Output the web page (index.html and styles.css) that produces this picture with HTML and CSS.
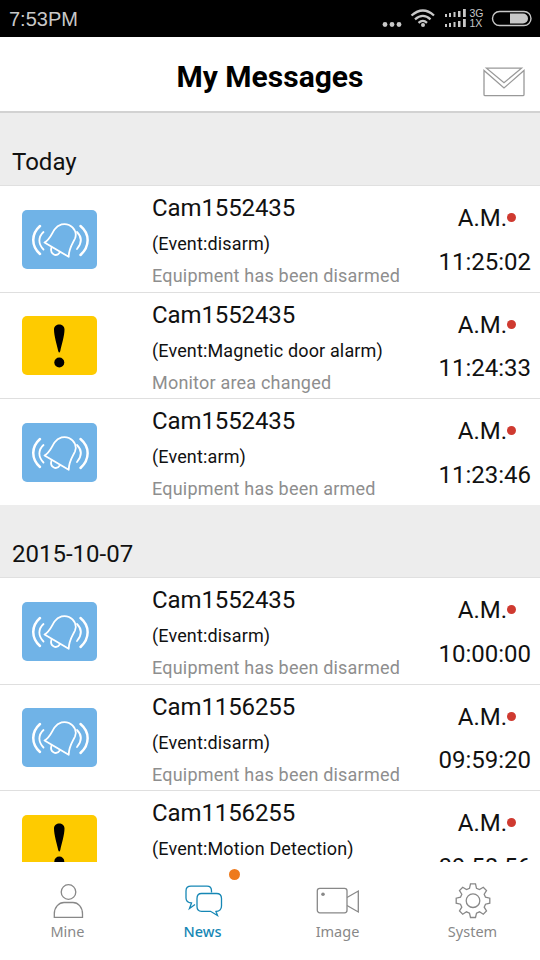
FILE: index.html
```html
<!DOCTYPE html>
<html lang="en">

<head>
    <meta charset="UTF-8" />
    <meta name="viewport" content="width=device-width, initial-scale=1.0" />
    <title>My Messages</title>
    <link rel="stylesheet" href="styles.css">
</head>

<body>
    <!-- Shared row icons -->
    <svg class="sprite" width="0" height="0">
        <symbol id="bell" viewBox="0 0 75 59">
            <g fill="none" stroke="#fff" stroke-width="1.8" stroke-linecap="round" stroke-linejoin="round">
                <path d="M22.500 32.500C28 29.500 29.500 24 32.500 19.500C36.500 14 42.500 13 47 15C53 18 55 23.500 53 28.500C50.500 34 46.800 38 46.700 46.800Z" />
                <path d="M29.500 37.500C27.500 43.500 34 48 38 42.200" />
                <path d="M21.500 22C16 27 16 34 21.500 39.500M55 22C60 27 60 33 55 39" />
                <path stroke-width="2.500" d="M18 16C9 24 9 36 18 44M58.500 16C68 24 68 36 58.500 45" />
            </g>
        </symbol>
        <symbol id="warn" viewBox="0 0 75 59">
            <path d="M32 13.500C32 6.800 42.500 6.800 42.500 13.500C42.500 20 39.500 29 38.300 35Q37.200 38 36.200 35C35 29 32 20 32 13.500Z" />
            <circle cx="37.300" cy="46.500" r="5" />
        </symbol>
    </svg>

    <div class="status-bar">
        <span>7:53PM</span>
        <svg width="160" height="37" viewBox="0 0 160 37" fill="#c8c8c8">
            <circle cx="5" cy="24.500" r="2.400" />
            <circle cx="12" cy="24.500" r="2.400" />
            <circle cx="19" cy="24.500" r="2.400" />
            <g fill="none" stroke="#c8c8c8" stroke-width="2.300">
                <path d="M31.500 15.500Q43 5.500 54 15.500M35 19.300Q43 12.500 50.500 19.300M38.500 22.800Q43 19 47 22.800" />
            </g>
            <circle cx="43" cy="25" r="2" />
            <path d="M65 14h2v3h-2zM69 13h2v4h-2zM73.500 12h2v5h-2zM78 11h2.500v6h-2.500zM83 9h2.800v8h-2.800z" />
            <path d="M65 24h2v3h-2zM69 23h2v4h-2zM73.500 22h2v5h-2zM78 21h2.500v6h-2.500zM83 19h2.800v8h-2.800z" />
            <text x="89.500" y="17" class="net">3G</text>
            <text x="89.500" y="27" class="net">1X</text>
            <rect x="112.500" y="11.500" width="38.500" height="14" rx="7" fill="none" stroke="#c8c8c8" stroke-width="1.400" />
            <path d="M130 13.500h13a5 5 0 0 1 0 10h-13z" />
        </svg>
    </div>

    <header>
        <h1>My Messages</h1>
        <svg class="mail" width="42" height="30" viewBox="0 0 42 30" fill="none" stroke="#999" stroke-width="1.300">
            <path d="M1 3.500V27.500Q1 28.700 2.200 28.700H39.800Q41 28.700 41 27.500V3.500L21 21Z" />
            <path d="M3.500 1.200H38.500L21 15.700Z" />
        </svg>
    </header>

    <main>
        <h2>Today</h2>
        <ul>
            <li>
                <svg class="icon blue"><use href="#bell" /></svg>
                <div class="info">
                    <p class="name">Cam1552435</p>
                    <p class="event">(Event:disarm)</p>
                    <p class="desc">Equipment has been disarmed</p>
                </div>
                <div class="time"><p class="unread">A.M.</p><p>11:25:02</p></div>
            </li>
            <li>
                <svg class="icon yellow"><use href="#warn" /></svg>
                <div class="info">
                    <p class="name">Cam1552435</p>
                    <p class="event">(Event:Magnetic door alarm)</p>
                    <p class="desc">Monitor area changed</p>
                </div>
                <div class="time"><p class="unread">A.M.</p><p>11:24:33</p></div>
            </li>
            <li>
                <svg class="icon blue"><use href="#bell" /></svg>
                <div class="info">
                    <p class="name">Cam1552435</p>
                    <p class="event">(Event:arm)</p>
                    <p class="desc">Equipment has been armed</p>
                </div>
                <div class="time"><p class="unread">A.M.</p><p>11:23:46</p></div>
            </li>
        </ul>

        <h2>2015-10-07</h2>
        <ul>
            <li>
                <svg class="icon blue"><use href="#bell" /></svg>
                <div class="info">
                    <p class="name">Cam1552435</p>
                    <p class="event">(Event:disarm)</p>
                    <p class="desc">Equipment has been disarmed</p>
                </div>
                <div class="time"><p class="unread">A.M.</p><p>10:00:00</p></div>
            </li>
            <li>
                <svg class="icon blue"><use href="#bell" /></svg>
                <div class="info">
                    <p class="name">Cam1156255</p>
                    <p class="event">(Event:disarm)</p>
                    <p class="desc">Equipment has been disarmed</p>
                </div>
                <div class="time"><p class="unread">A.M.</p><p>09:59:20</p></div>
            </li>
            <li>
                <svg class="icon yellow"><use href="#warn" /></svg>
                <div class="info">
                    <p class="name">Cam1156255</p>
                    <p class="event">(Event:Motion Detection)</p>
                </div>
                <div class="time"><p class="unread">A.M.</p><p>09:58:56</p></div>
            </li>
        </ul>
    </main>

    <nav>
        <a>
            <svg width="44" height="38" viewBox="0 0 44 38">
                <circle cx="22.500" cy="10" r="7.300" />
                <path d="M8.300 35.300V32C8.300 25 13 20.500 18 20.500H27C32 20.500 36.500 25 36.500 32V35.300Z" />
            </svg>
            <span>Mine</span>
        </a>
        <a class="active">
            <svg width="44" height="38" viewBox="0 0 44 38">
                <path d="M30.500 10.500V9Q30.500 4.200 26 4.200H10Q5 4.200 5 9V16Q5 20.500 10.500 21L8.500 26.500L14 22.500" />
                <path d="M20.500 11.500H35.500Q40.500 11.500 40.500 16.500V24Q40.500 29 35 29.500L36.500 33.500L29.500 29.300H20.500Q16 29.300 16 24.500V16.500Q16 11.500 20.500 11.500Z" />
            </svg>
            <span>News</span>
        </a>
        <a>
            <svg width="44" height="38" viewBox="0 0 44 38">
                <rect x="1.300" y="6.300" width="29.700" height="24.500" rx="2.500" />
                <path d="M31 15.500L42.300 9V30L31 23.500" />
                <circle class="dot" cx="7" cy="12.300" r="1.800" />
            </svg>
            <span>Image</span>
        </a>
        <a>
            <svg width="44" height="38" viewBox="0 0 44 38">
                <circle cx="22" cy="18.700" r="6.800" />
                <path d="M19.500 1.900H24.500L25.500 6.300L28.500 7.600L32.300 5.300L35.500 8.500L33.200 12.200L34.500 15.200L38.800 16.200V21.200L34.500 22.200L33.200 25.200L35.500 29L32.300 32.200L28.500 29.800L25.500 31.100L24.500 35.500H19.500L18.500 31.100L15.500 29.800L11.700 32.200L8.500 29L10.800 25.200L9.500 22.200L5.200 21.200V16.200L9.500 15.200L10.800 12.200L8.500 8.500L11.700 5.300L15.500 7.600L18.500 6.300Z" />
            </svg>
            <span>System</span>
        </a>
    </nav>
</body>

</html>
```

FILE: styles.css
```css
* {
    box-sizing: border-box;
}

body {
    font-family: Roboto, "Liberation Sans", sans-serif;
    background-color: #fff;
    color: #111;
    margin: 0;
    height: 960px;
    display: flex;
    flex-direction: column;
    overflow: hidden;
}

h1,
h2,
p,
ul {
    margin: 0;
    padding: 0;
}

.sprite {
    position: absolute;
}

.status-bar {
    flex: none;
    display: flex;
    justify-content: space-between;
    height: 37px;
    padding-left: 9px;
    background-color: #000;
    color: #c8c8c8;
    font-family: "Liberation Sans", sans-serif;
    font-size: 20px;
    line-height: 39px;
}

.net {
    font-size: 10.5px;
}

header {
    flex: none;
    display: grid;
    grid-template-columns: 1fr auto 1fr;
    align-items: center;
    height: 76px;
    padding-right: 15px;
    border-bottom: 2px solid #d2d2d2;
}

h1 {
    grid-column: 2;
    padding: 5px 0 0 15px;
    font-size: 30px;
    line-height: 36px;
    color: #000;
}

.mail {
    justify-self: end;
    margin-top: 16px;
}

main {
    flex: 1;
    min-height: 0;
    overflow: hidden;
}

h2 {
    height: 73px;
    padding: 34.5px 0 0 12px;
    background-color: #ededed;
    border-bottom: 1px solid #e0e0e0;
    font-size: 24px;
    font-weight: 400;
    line-height: 28px;
}

ul {
    list-style: none;
}

li {
    display: flex;
    height: 106.5px;
    border-bottom: 1px solid #dfdfdf;
}

li:last-child {
    height: 106px;
    border-bottom: 0;
}

.icon {
    flex: none;
    width: 75px;
    height: 59px;
    margin: 23.6px 54px 0 22px;
    border-radius: 5px;
}

.blue {
    background-color: #70b3e7;
}

.yellow {
    background-color: #fecb00;
}

.info {
    flex: 1;
    padding-left: 1px;
    white-space: nowrap;
}

.name {
    padding-top: 7px;
    font-size: 24px;
    line-height: 30px;
    letter-spacing: -0.1px;
}

.event {
    padding-top: 10px;
    font-size: 18px;
    line-height: 22px;
    letter-spacing: 0.14px;
}

.desc {
    padding-top: 10px;
    font-size: 18px;
    line-height: 22px;
    letter-spacing: 0.2px;
    color: #8e8e8e;
}

.time {
    width: 110px;
    padding: 11px 9px 0 0;
    font-size: 24px;
    line-height: 43.5px;
    text-align: right;
}

.unread {
    position: relative;
    padding-right: 24px;
}

.unread::after {
    content: "";
    position: absolute;
    right: 15.5px;
    top: 16px;
    width: 9px;
    height: 9px;
    border-radius: 50%;
    background-color: #cf3a30;
}

nav {
    flex: none;
    display: grid;
    grid-template-columns: repeat(4, 1fr);
    height: 98px;
    padding-top: 20px;
    background-color: #fff;
    color: #888;
    font-family: "Noto Sans", sans-serif;
    font-size: 14.5px;
    line-height: 20px;
}

nav a {
    display: flex;
    flex-direction: column;
    align-items: center;
    gap: 1px;
    position: relative;
}

nav svg {
    fill: none;
    stroke: currentColor;
    stroke-width: 1.3;
}

nav .dot {
    fill: currentColor;
    stroke: none;
}

.active {
    color: #1687b5;
}

.active span {
    font-weight: 500;
}

.active::after {
    content: "";
    position: absolute;
    left: 94px;
    top: -13px;
    width: 11px;
    height: 11px;
    border-radius: 50%;
    background-color: #ee7a1c;
}
```
